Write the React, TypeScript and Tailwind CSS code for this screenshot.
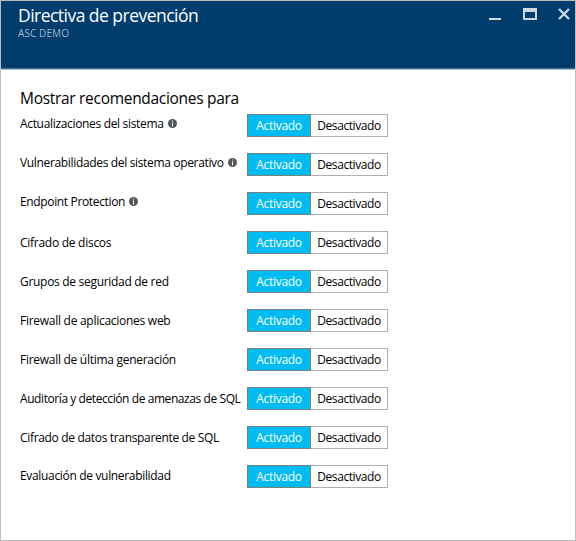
type Row = { label: string; info?: boolean; style: string };

const rows: Row[] = [
  { label: 'Actualizaciones del sistema', info: true, style: 'pb-[3px] tracking-[-0.33px]' },
  { label: 'Vulnerabilidades del sistema operativo', info: true, style: 'pb-[3px] tracking-[-0.34px]' },
  { label: 'Endpoint Protection', info: true, style: 'pb-[3px] tracking-[-0.35px]' },
  { label: 'Cifrado de discos', style: 'pt-px tracking-[-0.27px]' },
  { label: 'Grupos de seguridad de red', style: 'pt-px tracking-[-0.3px]' },
  { label: 'Firewall de aplicaciones web', style: 'pt-px tracking-[-0.27px]' },
  { label: 'Firewall de última generación', style: 'pt-px tracking-[-0.28px]' },
  { label: 'Auditoría y detección de amenazas de SQL', style: 'pt-px tracking-[-0.42px]' },
  { label: 'Cifrado de datos transparente de SQL', style: 'pt-px tracking-[-0.33px]' },
  { label: 'Evaluación de vulnerabilidad', style: 'pb-px tracking-[-0.33px]' },
];

function InfoIcon() {
  return (
    <svg className="mb-px ml-1 size-[9px] shrink-0" viewBox="0 0 9 9" aria-hidden="true">
      <circle cx="4.5" cy="4.5" r="4.5" fill="#55565b" />
      <path d="M4 1.5h1v1H4zM4 3.5h1v4H4z" fill="#fff" />
    </svg>
  );
}

function Toggle() {
  return (
    <div className="flex h-[23px] w-[141px] shrink-0 text-[12px] leading-[21px]">
      <button className="w-16 shrink-0 border border-[#7f7f7f] bg-[#00bcf2] text-center tracking-[-0.3px] text-white">
        <span>Activado</span>
      </button>
      <button className="flex-1 border border-l-0 border-[#b0b0b0] bg-white text-center tracking-[-0.42px] text-black">
        <span>Desactivado</span>
      </button>
    </div>
  );
}

export default function App() {
  return (
    <div className="flex h-[541px] w-[576px] flex-col overflow-hidden whitespace-nowrap border border-[#bebebe] bg-white font-['Open_Sans','Noto_Sans',sans-serif] text-black">
      <header className="flex h-[69px] shrink-0 justify-between border-b border-[#a9bccb] bg-[#003c6c] pl-[17px] pr-[5px] shadow-[inset_0_-1px_0_#447099]">
        <div>
          <h1 className="mt-[2px] text-[17.5px] leading-[24px] tracking-[-0.53px] text-white">Directiva de prevención</h1>
          <p className="text-[10px] leading-[12px] tracking-[0.1px] text-[#9fb9cd]">ASC DEMO</p>
        </div>
        <svg className="mt-[7px] h-3 w-[82px]" viewBox="0 0 82 12" fill="none">
          <path d="M1 11h12" stroke="#ccd8e2" strokeWidth="2" />
          <path d="M35 0h14v12H35zM37 4v6h10V4z" fill="#ccd8e2" fillRule="evenodd" />
          <path d="M71 1l10 10M81 1l-10 10" stroke="#ccd8e2" strokeWidth="2.4" />
        </svg>
      </header>
      <main className="pl-[19px] pt-[18px]">
        <h2 className="h-[26px] text-[15.5px] leading-[20px] tracking-[-0.3px]">Mostrar recomendaciones para</h2>
        <div className="flex flex-col gap-4">
          {rows.map((row) => (
            <div key={row.label} className="flex h-[23px]">
              <div className={`flex w-[227px] shrink-0 items-center text-[12px] leading-4 ${row.style}`}>
                <span>{row.label}</span>
                {row.info && <InfoIcon />}
              </div>
              <Toggle />
            </div>
          ))}
        </div>
      </main>
    </div>
  );
}
